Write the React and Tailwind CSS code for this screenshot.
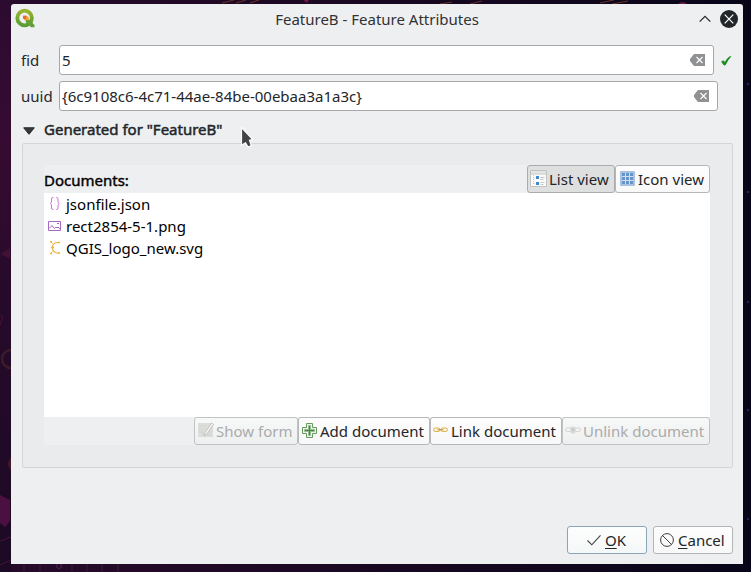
import React from 'react';

function Backdrop() {
  return (
    <svg className="absolute inset-0 h-full w-full" viewBox="0 0 751 572" aria-hidden="true">
      <defs>
        <linearGradient id="sky" x1="0" x2="1">
          <stop offset="0" stopColor="#270b2b" />
          <stop offset="0.45" stopColor="#1b0822" />
          <stop offset="1" stopColor="#080519" />
        </linearGradient>
        <linearGradient id="left" x1="0" x2="0" y1="0" y2="1">
          <stop offset="0" stopColor="#2c0b31" />
          <stop offset="0.25" stopColor="#370b31" />
          <stop offset="0.5" stopColor="#270a2b" />
          <stop offset="1" stopColor="#1c0a24" />
        </linearGradient>
      </defs>
      <rect width="751" height="572" fill="url(#sky)" />
      <rect width="11" height="572" fill="url(#left)" />
      <path d="M10 248 1 254l9 5z" fill="#431036" />
      <path d="M0 315l3 2-3 8" fill="none" stroke="#4a1236" />
      <circle cx="11" cy="359" r="9" fill="none" stroke="#3c1c2b" strokeWidth="2.5" />
      <circle cx="17" cy="464" r="9" fill="#40172a" />
      <path d="M0 495l10 5v21l-5 6-5-4z" fill="#4c1040" />
      <path d="M0 541l11-4M0 565l11-5" stroke="#45153c" />
      <path d="M24 564v8M40 564v8M72 564v8M87 564v8M102 564v8M118 564v8" stroke="#3c1c2c" />
      <circle cx="59" cy="566" r="2.5" fill="none" stroke="#54204a" />
      <path d="M222 3l12-3M236 3l10-3M250 3l9-3M440 4l12-2M600 3l14-3M612 4l16-3M470 4l12-3" stroke="#6b3428" />
      <path d="M303 0h6l-2 3zM678 4q5-4 9 0" fill="#6a1745" />
      <circle cx="748" cy="302" r="1.2" fill="#1e2650" />
      <circle cx="748" cy="410" r="1.2" fill="#1e2650" />
      <circle cx="748" cy="192" r="1.2" fill="#2a2158" />
      <circle cx="748" cy="84" r="1.2" fill="#1e2456" />
      <circle cx="748" cy="519" r="1.2" fill="#1e2650" />
    </svg>
  );
}

function QgisLogo() {
  return (
    <svg className="h-[20px] w-[20px] -translate-y-px" viewBox="0 0 20 20">
      <defs>
        <linearGradient id="q" x1="0" x2="0" y1="0" y2="1">
          <stop offset="0" stopColor="#97b52c" />
          <stop offset="1" stopColor="#5a9c35" />
        </linearGradient>
      </defs>
      <circle cx="9.6" cy="10" r="7.3" fill="none" stroke="url(#q)" strokeWidth="3.800" />
      <path d="M10.700 11.500l2.800-.5 6 6v2.200h-3.500l-5.300-5.200z" fill="#62a038" />
      <path d="M8 7.800h4l2.500 3-1.300 1.800-2.400-1.200-.2 1.400L8 10.500z" fill="#f5a638" />
      <path d="M8 7.800h3.200l.4 2.200-1.600 1.400-2-1.200z" fill="#e96a28" />
    </svg>
  );
}

function ClearIcon() {
  return (
    <svg className="h-[12px] w-[15px] shrink-0" viewBox="0 0 15 12">
      <path d="M4 0h11v12H4L0 7V5z" fill="#909192" />
      <path d="M6.500 3l6 6M12.500 3l-6 6" stroke="#fff" strokeWidth="1.100" />
    </svg>
  );
}

function Field({ label, value, width }) {
  return (
    <div className="flex h-[30px] items-center">
      <label className="w-[38px] shrink-0 whitespace-nowrap text-[#26292c]">{label}</label>
      <div
        className={`flex h-[30px] items-center justify-between rounded-[3px] border border-[#a5a7a8] bg-white pr-[8px] pl-[2px] text-[#232629] ${width}`}
      >
        <span>{value}</span>
        <ClearIcon />
      </div>
      {label === 'fid' && (
        <svg className="mt-px ml-[7px] h-[10px] w-[11px]" viewBox="0 0 11 10">
          <path
            d="M.6 5.700L2.500 4.700l1.300 2Q6 2.300 9 .500L9.700.600Q6.300 4.300 4.500 8.700L3 9.100z"
            fill="#168a1c"
            stroke="#168a1c"
            strokeWidth=".8"
          />
        </svg>
      )}
    </div>
  );
}

function ToolButton({ icon, children, width, pressed, disabled, iconSlot = 'w-[18px]' }) {
  const face = pressed
    ? 'bg-[#dedfdf] text-[#232629] border-[#a9abac]'
    : disabled
      ? 'bg-linear-to-b from-[#f7f8f8] to-[#eeefef] text-[#a9abac] border-[#c0c2c3]'
      : 'bg-linear-to-b from-[#fdfdfd] to-[#f8f8f8] text-[#232629] border-[#b5b7b8]';
  return (
    <button
      className={`flex h-[28px] items-center rounded-[3px] border pl-[3px] whitespace-nowrap ${face} ${width}`}
    >
      <span className={`flex shrink-0 items-center ${iconSlot}`}>{icon}</span>
      <span>{children}</span>
    </button>
  );
}

const ListIcon = (
  <svg className="h-[17px] w-[17px] shrink-0 -translate-x-px -translate-y-px" viewBox="0 0 17 17">
    <path d="M.5.500h16v16H.5z" fill="#fbfbfb" stroke="#c1c3c3" />
    <path d="M1 1h15v2.500H1z" fill="#e4e5e5" />
    <path d="M1 4h15" stroke="#c1c3c3" />
    <path d="M3.500 5v10M3.500 8h2M3.500 13.500h2" stroke="#c9cccd" strokeDasharray="1 1" />
    <path d="M6 6h3v3H6zM6 12h3v3H6z" fill="#4388ca" />
    <path d="M10.500 7.500h4M10.500 9.500h3M10.500 12.500h4M10.500 14.500h3" stroke="#c4c5c5" />
  </svg>
);

const GridIcon = (
  <svg className="h-[15px] w-[15px] shrink-0 translate-x-px -translate-y-px" viewBox="0 0 15 15">
    <rect width="15" height="15" rx="1" fill="#a9c1e0" />
    <path
      d="M2 2h3v3H2zM6 2h3v3H6zM10 2h3v3h-3zM2 6h3v3H2zM6 6h3v3H6zM10 6h3v3h-3zM2 10h3v3H2zM6 10h3v3H6zM10 10h3v3h-3z"
      fill="#6594c8"
    />
    <path d="M2 5.500h11M2 9.500h11M5.500 2v11M9.500 2v11" stroke="#d3dfef" />
  </svg>
);

const FormIcon = (
  <svg className="h-[16px] w-[16px] shrink-0 -translate-y-px" viewBox="0 0 16 16">
    <path d="M0 1h15v14H0z" fill="#dddedb" />
    <path d="M1 4h7M1 7h6M1 10h4M10 10h4M8 13h6" stroke="#d3d5d1" />
    <path d="M13.500 1L7 10.500 6 14l3-2L15.500 2.500z" fill="#f0f0f0" stroke="#b9bbba" strokeWidth=".8" />
    <path d="M3.500 9.500l2.500 4.500" stroke="#cbcdcc" strokeWidth=".8" />
  </svg>
);

const AddIcon = (
  <svg className="h-[15px] w-[15px] shrink-0 -translate-y-px" viewBox="0 0 15 15">
    <path d="M4.500.500h6v4h4v6h-4v4h-6v-4h-4v-6h4z" fill="#edf5eb" stroke="#669a61" />
    <path d="M6.500 2.500h2v4h4v2h-4v4h-2v-4h-4v-2h4z" fill="#b4d2af" stroke="#86b381" strokeWidth=".8" />
    <path d="M7.500 3v9M3 7.500h9" stroke="#498345" />
  </svg>
);

const LinkIcon = (
  <svg className="h-[6px] w-[15px] shrink-0 -translate-x-px -translate-y-px" viewBox="0 0 15 6">
    <rect x=".5" y="1" width="6.500" height="3.500" rx="1.700" fill="#fff7df" stroke="#dfb14a" />
    <rect x="8" y="1" width="6.500" height="3.500" rx="1.700" fill="#fff7df" stroke="#dfb14a" />
    <path d="M4.500 2.800h6" stroke="#c18b20" />
  </svg>
);

const UnlinkIcon = (
  <svg className="h-[8px] w-[16px] shrink-0 -translate-x-px -translate-y-px" viewBox="0 0 16 8">
    <rect x=".5" y="2" width="6.500" height="3.500" rx="1.700" fill="none" stroke="#d2d4d4" />
    <rect x="9" y="2" width="6.500" height="3.500" rx="1.700" fill="none" stroke="#d2d4d4" />
    <path d="M5 3.800h6M6 1l4 6M10 1L6 7M8 0v8" stroke="#c2c4c4" strokeWidth=".8" />
  </svg>
);

const files = [
  {
    name: 'jsonfile.json',
    icon: (
      <svg className="h-[14px] w-[14px]" viewBox="0 0 14 14" fill="none" stroke="#cc74d8">
        <path d="M5.500 .500H5Q3.500 .500 3.500 2v3L2.500 6.500l1 1.500v3q0 1.500 1.500 1.500h.5M8 .500h.5q1.500 0 1.500 1.500v3l1 1.500-1 1.500v3q0 1.500-1.500 1.500H8" />
      </svg>
    ),
  },
  {
    name: 'rect2854-5-1.png',
    icon: (
      <svg className="h-[14px] w-[14px]" viewBox="0 0 14 14" fill="none" stroke="#a469c1">
        <path d="M.5 2.500h12v9H.5zM1 9.500l3-3 2.500 3 1.500-1.500 1 1 1-1 2.500 2.500" />
        <path d="M9 4.500h2" />
      </svg>
    ),
  },
  {
    name: 'QGIS_logo_new.svg',
    icon: (
      <svg className="h-[14px] w-[14px]" viewBox="0 0 14 14" fill="none" stroke="#edb440">
        <path d="M11 1.500H9Q4.500 2 4.500 6.500t4.500 5.500h2" strokeWidth="1.100" />
        <path d="M2.500 .500L4 2l2 2M2.500 12.500L4 11l2-2" strokeDasharray="2 .6" />
        <path d="M2 .700h2M3 6.500h3M2 12.500h2M10 1.500h2M10 12h2" strokeWidth="1.500" />
      </svg>
    ),
  },
];

export default function App() {
  return (
    <div className="relative h-[572px] w-[751px] overflow-hidden bg-[#160820] font-['Noto_Sans',sans-serif] text-[15px] leading-[20px]">
      <Backdrop />
      <div className="relative mt-[4px] ml-[11px] flex h-[560px] w-[732px] flex-col rounded-t-[3px] bg-[#eeeff1]">
        <header className="flex h-[30px] shrink-0 items-center pr-[5px] pl-[4px] text-[#303235]">
          <QgisLogo />
          <h1 className="grow pl-[20px] text-center">FeatureB - Feature Attributes</h1>
          <svg className="mr-[9px] h-[8px] w-[12px]" viewBox="0 0 12 8">
            <path d="M.7 6.700L6 1.400l5.300 5.300" fill="none" stroke="#232629" strokeWidth="1.200" />
          </svg>
          <svg className="h-[18px] w-[18px]" viewBox="0 0 18 18">
            <circle cx="9" cy="9" r="9" fill="#232629" />
            <path d="M4.700 4.700l8.600 8.600M13.300 4.700l-8.600 8.600" stroke="#fff" strokeWidth="1.200" />
          </svg>
        </header>

        <div className="mt-[11px] flex flex-col gap-[6px] pl-[10px]">
          <Field label="fid" value="5" width="w-[655px]" />
          <Field label="uuid" value="{6c9108c6-4c71-44ae-84be-00ebaa3a1a3c}" width="w-[659px]" />
        </div>

        <div className="mt-[8px] flex h-[20px] items-center pl-[12px]">
          <svg className="mt-[3px] mr-[9px] h-[8px] w-[12px]" viewBox="0 0 12 8">
            <path d="M.7.800h10.600L6 7.300z" fill="#37393b" stroke="#232629" />
          </svg>
          <h2 className="text-[#232629] [-webkit-text-stroke:0.5px_#232629]">Generated for "FeatureB"</h2>
        </div>

        <section className="mt-[4px] ml-[11px] h-[325px] w-[711px] shrink-0 rounded-[2px] border border-[#d3d5d6] bg-[#eaebed] pt-[21px] pl-[21px]">
          <div className="flex h-[280px] w-[666px] flex-col bg-[#eeeff1]">
            <div className="flex h-[28px] shrink-0 items-center">
              <span className="grow pt-px text-black [-webkit-text-stroke:0.4px_#000]">Documents:</span>
              <ToolButton icon={ListIcon} width="w-[88px]" pressed>
                List view
              </ToolButton>
              <ToolButton icon={GridIcon} width="w-[95px]" iconSlot="w-[19px]">
                Icon view
              </ToolButton>
            </div>
            <ul className="grow bg-white pl-[4px] text-black">
              {files.map((f) => (
                <li key={f.name} className="flex h-[22px] items-center gap-[4px]">
                  {f.icon}
                  <span>{f.name}</span>
                </li>
              ))}
            </ul>
            <div className="flex h-[28px] shrink-0 justify-end">
              <ToolButton icon={FormIcon} width="w-[104px]" disabled>
                Show form
              </ToolButton>
              <ToolButton icon={AddIcon} width="w-[132px]">
                Add document
              </ToolButton>
              <ToolButton icon={LinkIcon} width="w-[132px]" iconSlot="w-[17px]">
                Link document
              </ToolButton>
              <ToolButton icon={UnlinkIcon} width="w-[148px]" iconSlot="w-[17px]" disabled>
                Unlink document
              </ToolButton>
            </div>
          </div>
        </section>

        <footer className="mt-auto mb-[10px] flex justify-end gap-[6px] pr-[10px] text-[#232629]">
          <button className="flex h-[28px] w-[80px] items-center rounded-[3px] border border-[#89a6b8] bg-linear-to-b from-[#fdfdfd] to-[#f5f8f8] pl-[19px]">
            <svg className="mr-[4px] h-[12px] w-[14px]" viewBox="0 0 14 12">
              <path d="M.5 6.500l4.300 4.300L13.500 1.300" fill="none" stroke="#3b3e40" strokeWidth="1.100" />
            </svg>
            <span>
              <span className="underline decoration-1 underline-offset-[2px]">O</span>K
            </span>
          </button>
          <button className="flex h-[28px] w-[80px] items-center rounded-[3px] border border-[#b2b4b5] bg-linear-to-b from-[#fdfdfd] to-[#f8f8f8] pl-[6px]">
            <svg className="mr-[4px] h-[14px] w-[14px] shrink-0" viewBox="0 0 14 14" fill="none" stroke="#3b3e40">
              <circle cx="7" cy="7" r="6.400" />
              <path d="M2.500 2.500l9 9" />
            </svg>
            <span>
              <span className="underline decoration-1 underline-offset-[2px]">C</span>ancel
            </span>
          </button>
        </footer>
      </div>

      <svg className="absolute top-[126px] left-[240px] h-[23px] w-[14px]" viewBox="0 0 14 23">
        <path d="M1.500 1.500L12.800 13.500l-3.300.8 1.800 5.200-3.200 1.500-2.600-4.200-4 2.400z" fill="#424446" stroke="#fff" strokeWidth="1.200" />
      </svg>
    </div>
  );
}
